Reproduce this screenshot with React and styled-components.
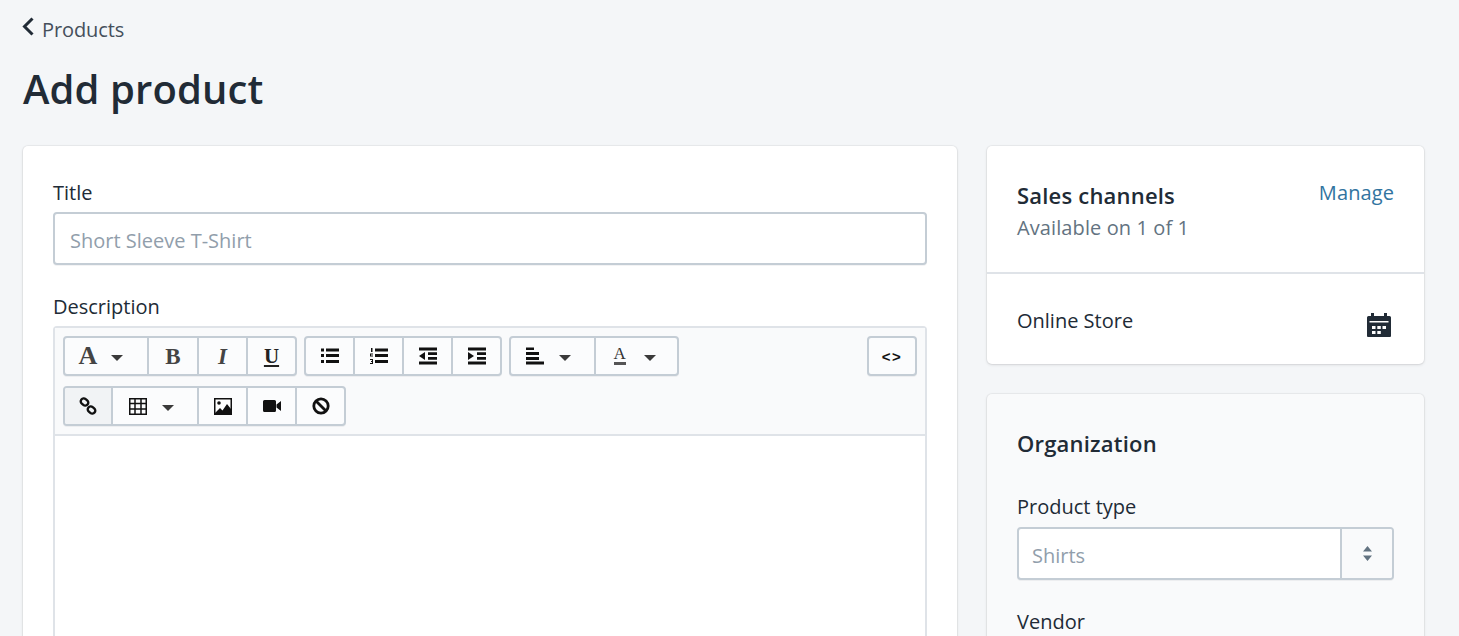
import styled, { createGlobalStyle } from 'styled-components';

const GlobalStyle = createGlobalStyle`
  html, body { margin: 0; height: 636px; overflow: hidden; background: #f4f6f8; }
  body { font-family: "Open Sans", "Noto Sans", sans-serif; color: #212b36; }
  * { box-sizing: border-box; }
`;

const Page = styled.div`
  padding: 17px 35px 0 23px;
`;

const BackLink = styled.a`
  display: flex;
  align-items: center;
  gap: 8px;
  height: 24px;
  margin-left: -1px;
  font-size: 20px;
  letter-spacing: -0.1px;
  color: #454f5b;

  svg {
    margin-top: -4px;
  }
`;

const PageTitle = styled.h1`
  margin: 20px 0 30px;
  height: 55px;
  font-size: 40px;
  line-height: 55px;
  font-weight: 600;
  letter-spacing: 0.1px;
`;

const Columns = styled.div`
  display: flex;
  gap: 30px;
  align-items: flex-start;
`;

const MainColumn = styled.div`
  width: 934px;
`;

const SideColumn = styled.div`
  width: 437px;
  display: flex;
  flex-direction: column;
  gap: 30px;
`;

const Card = styled.section`
  background: ${(p) => (p.$muted ? '#f9fafb' : '#fff')};
  border-radius: 5px;
  box-shadow: 0 0 0 1px rgba(63, 63, 68, 0.05), 0 1px 3px 0 rgba(63, 63, 68, 0.15);
`;

const MainCard = styled(Card)`
  padding: 33px 30px 0;
  height: 600px;
`;

const Label = styled.label`
  display: block;
  height: 27px;
  margin-top: ${(p) => p.$top || 0}px;
  font-size: 20px;
  line-height: 27px;
  color: #212b36;
`;

const TextField = styled.div`
  display: flex;
  align-items: center;
  height: 53px;
  padding: 3px 15px 0;
  margin: 6px 0 28px;
  background: #fff;
  border: 2px solid #c4cdd5;
  border-radius: 4px;
  box-shadow: 0 1px 0 0 rgba(22, 29, 37, 0.05);
  font-size: 20px;
  color: #919eab;
`;

const Editor = styled.div`
  margin-top: 6px;
  border: 2px solid #dfe3e8;
  border-bottom: 0;
  border-radius: 4px 4px 0 0;
  height: 400px;
`;

const Toolbar = styled.div`
  display: flex;
  justify-content: space-between;
  height: 108px;
  padding: 8px 8px 0;
  background: #f9fafb;
  border-bottom: 2px solid #dfe3e8;
`;

const ToolRows = styled.div`
  display: flex;
  flex-direction: column;
  gap: 10px;
`;

const ToolRow = styled.div`
  display: flex;
  gap: 7px;
`;

const ToolGroup = styled.div`
  display: flex;
  height: 40px;
  border: 2px solid #c4cdd5;
  border-radius: 4px;
  background: #fbfcfd;
  box-shadow: 0 1px 0 0 rgba(22, 29, 37, 0.05);
  overflow: hidden;
`;

const ToolButton = styled.div`
  display: flex;
  align-items: center;
  justify-content: center;
  gap: ${(p) => p.$gap || 15}px;
  width: ${(p) => p.$width || 49}px;
  height: 100%;
  padding-right: ${(p) => p.$shift || 0}px;
  background: ${(p) => (p.$active ? '#f1f3f5' : 'transparent')};
  color: #111;

  &:not(:last-child) {
    border-right: 2px solid #c4cdd5;
  }

  &:last-child {
    width: ${(p) => (p.$width || 49) - 2}px;
  }
`;

const Glyph = styled.span`
  font-family: "Liberation Serif", serif;
  font-size: ${(p) => p.$size || 23}px;
  line-height: 1;
  font-weight: 700;
  font-style: ${(p) => (p.$italic ? 'italic' : 'normal')};
  text-decoration: ${(p) => (p.$underline ? 'underline' : 'none')};
  text-decoration-thickness: 2px;
  text-underline-offset: 2px;
  color: ${(p) => p.$color || '#444'};
`;

const ColorGlyph = styled.span`
  display: block;
  width: 12px;
  padding-bottom: 1px;
  border-bottom: 3px solid #555;
  font-family: "Liberation Serif", serif;
  font-size: 17px;
  line-height: 14px;
  text-align: center;
  color: #333;
`;

const CodeLabel = styled.span`
  font-family: "Liberation Sans", sans-serif;
  font-size: 15px;
  font-weight: 700;
  letter-spacing: 1.5px;
`;

const Caret = styled.i`
  display: block;
  width: 0;
  height: 0;
  border-left: 6px solid transparent;
  border-right: 6px solid transparent;
  border-top: 6px solid #3a3a3a;
  margin-top: 3px;
`;

const CardHead = styled.div`
  display: flex;
  justify-content: space-between;
  height: 128px;
  padding: 30px 30px 0;
  border-bottom: 2px solid #dfe3e8;
`;

const CardTitle = styled.h2`
  margin: 0;
  font-size: 22px;
  line-height: 38px;
  font-weight: 600;
  letter-spacing: 0.2px;
`;

const Subdued = styled.div`
  font-size: 20px;
  line-height: 28px;
  letter-spacing: 0.1px;
  color: #637381;
`;

const ManageLink = styled.a`
  font-size: 20px;
  line-height: 34px;
  letter-spacing: 0.1px;
  color: #31749f;
`;

const ChannelRow = styled.div`
  display: flex;
  justify-content: space-between;
  align-items: center;
  height: 90px;
  padding: 2px 30px 0;
  font-size: 20px;

  svg {
    margin: 9px 3px 0 0;
  }
`;

const OrgCard = styled(Card)`
  padding: 30px 30px 40px;
  height: 300px;
`;

const SelectField = styled.div`
  display: flex;
  height: 53px;
  margin: 7px 0 28px;
  border: 2px solid #c4cdd5;
  border-radius: 4px;
  background: #fff;
  box-shadow: 0 1px 0 0 rgba(22, 29, 37, 0.05);
  overflow: hidden;
`;

const SelectValue = styled.div`
  flex: 1;
  display: flex;
  align-items: center;
  padding: 3px 13px 0;
  font-size: 20px;
  color: #919eab;
`;

const SelectArrows = styled.div`
  width: 52px;
  display: flex;
  align-items: center;
  justify-content: center;
  background: #f9fafb;
  border-left: 2px solid #c4cdd5;
`;

const Icon = ({ children, w = 18, h = 18 }) => (
  <svg width={w} height={h} viewBox={`0 0 ${w} ${h}`} fill="#111" aria-hidden="true">
    {children}
  </svg>
);

const App = () => (
  <>
    <GlobalStyle />
    <Page>
      <BackLink>
        <svg width="12" height="20" viewBox="0 0 12 20" fill="none" stroke="#212b36" strokeWidth="3">
          <path d="M10.500 1.500 2.500 9.500l8 8" />
        </svg>
        Products
      </BackLink>
      <PageTitle>Add product</PageTitle>
      <Columns>
        <MainColumn>
          <MainCard>
            <Label>Title</Label>
            <TextField>Short Sleeve T-Shirt</TextField>
            <Label>Description</Label>
            <Editor>
              <Toolbar>
                <ToolRows>
                  <ToolRow>
                    <ToolGroup>
                      <ToolButton $width={84} $shift={10} $gap={14}>
                        <Glyph $size={26}>A</Glyph>
                        <Caret />
                      </ToolButton>
                      <ToolButton $width={50}><Glyph>B</Glyph></ToolButton>
                      <ToolButton><Glyph $italic>I</Glyph></ToolButton>
                      <ToolButton><Glyph $underline $size={21} $color="#222">U</Glyph></ToolButton>
                    </ToolGroup>
                    <ToolGroup>
                      <ToolButton>
                        <Icon>
                          <path d="M0 1.500h3v3H0zM5 1.500h13v3H5zM0 7h3v3H0zM5 7h13v3H5zM0 13h3v3H0zM5 13h13v3H5z" />
                        </Icon>
                      </ToolButton>
                      <ToolButton>
                        <Icon>
                          <path d="M5 1.500h13v3H5zM5 7h13v3H5zM5 13h13v3H5zM1 1h1.500v4H1zM0 6.500h3v1H1v1h2v1H0zM0 12h3v5H0v-1h2v-1H1v-1h1v-1H0z" />
                        </Icon>
                      </ToolButton>
                      <ToolButton>
                        <Icon>
                          <path d="M0 0.500h18v3H0zM0 14.500h18v3H0zM9 5.300h9v2.700H9zM9 10h9v2.700H9zM6 5v8L0 9z" />
                        </Icon>
                      </ToolButton>
                      <ToolButton>
                        <Icon>
                          <path d="M0 0.500h18v3H0zM0 14.500h18v3H0zM9 5.300h9v2.700H9zM9 10h9v2.700H9zM0 5v8l6-4z" />
                        </Icon>
                      </ToolButton>
                    </ToolGroup>
                    <ToolGroup>
                      <ToolButton $width={85} $shift={8}>
                        <Icon>
                          <path d="M0 0.500h8V3H0zM0 5h13v3H0zM0 10h13v3H0zM0 14.500h18V17.500H0z" />
                        </Icon>
                        <Caret />
                      </ToolButton>
                      <ToolButton $width={83} $shift={4} $gap={18}>
                        <ColorGlyph>A</ColorGlyph>
                        <Caret />
                      </ToolButton>
                    </ToolGroup>
                  </ToolRow>
                  <ToolRow>
                    <ToolGroup>
                      <ToolButton $active $width={48}>
                        <svg width="18" height="18" viewBox="0 0 18 18" fill="none" stroke="#111" strokeWidth="2.400">
                          <rect x="1.500" y="2" width="8" height="6" rx="3" transform="rotate(40 5.500 5)" />
                          <rect x="8.500" y="10" width="8" height="6" rx="3" transform="rotate(40 12.500 13)" />
                        </svg>
                      </ToolButton>
                      <ToolButton $width={86} $shift={8}>
                        <svg width="18" height="17" viewBox="0 0 18 17" fill="none" stroke="#111" strokeWidth="1.500">
                          <rect x="0.750" y="0.750" width="16.500" height="15.500" />
                          <path d="M0 5.500h18M0 11h18M6 1v15M12 1v15" />
                        </svg>
                        <Caret />
                      </ToolButton>
                      <ToolButton>
                        <svg width="18" height="17" viewBox="0 0 18 17">
                          <rect x="0.750" y="0.750" width="16.500" height="15.500" fill="#fff" stroke="#111" strokeWidth="1.500" />
                          <circle cx="5" cy="5" r="1.800" fill="#111" />
                          <path d="M1 15l5-5 2.500 2.500L13 6l4 5v5H1z" fill="#111" />
                        </svg>
                      </ToolButton>
                      <ToolButton>
                        <Icon h={12}>
                          <path d="M0 1.500A1.500 1.500 0 0 1 1.500 0h10A1.500 1.500 0 0 1 13 1.500v9a1.500 1.500 0 0 1-1.500 1.500h-10A1.500 1.500 0 0 1 0 10.500zM13.500 4.500 18 1v10l-4.500-3.500z" />
                        </Icon>
                      </ToolButton>
                      <ToolButton>
                        <svg width="18" height="18" viewBox="0 0 18 18" fill="none" stroke="#111" strokeWidth="2.800">
                          <circle cx="9" cy="9" r="7.200" />
                          <path d="M4 4l10 10" />
                        </svg>
                      </ToolButton>
                    </ToolGroup>
                  </ToolRow>
                </ToolRows>
                <ToolRow>
                  <ToolGroup>
                    <ToolButton $width={48}><CodeLabel>&lt;&gt;</CodeLabel></ToolButton>
                  </ToolGroup>
                </ToolRow>
              </Toolbar>
            </Editor>
          </MainCard>
        </MainColumn>
        <SideColumn>
          <Card>
            <CardHead>
              <div>
                <CardTitle>Sales channels</CardTitle>
                <Subdued>Available on 1 of 1</Subdued>
              </div>
              <ManageLink>Manage</ManageLink>
            </CardHead>
            <ChannelRow>
              Online Store
              <svg width="24" height="24" viewBox="0 0 24 24" fill="#212b36">
                <path d="M0 4.500A1.500 1.500 0 0 1 1.500 3H4V0h3v3h10V0h3v3h2.500A1.500 1.500 0 0 1 24 4.500V23a1 1 0 0 1-1 1H1a1 1 0 0 1-1-1z" />
                <path fill="#fff" d="M2.500 8h19v1.500h-19zM5 13h3.500v3H5zM10.300 13h3.500v3h-3.500zM15.500 13H19v3h-3.500zM5 18h3.500v3H5zM10.300 18h3.500v3h-3.500z" />
              </svg>
            </ChannelRow>
          </Card>
          <OrgCard $muted>
            <CardTitle>Organization</CardTitle>
            <Label $top={31}>Product type</Label>
            <SelectField>
              <SelectValue>Shirts</SelectValue>
              <SelectArrows>
                <svg width="9" height="15" viewBox="0 0 9 15" fill="#637381">
                  <path d="M4.500 0 9 5.500H0zM4.500 15 9 9.500H0z" />
                </svg>
              </SelectArrows>
            </SelectField>
            <Label>Vendor</Label>
          </OrgCard>
        </SideColumn>
      </Columns>
    </Page>
  </>
);

export default App;
